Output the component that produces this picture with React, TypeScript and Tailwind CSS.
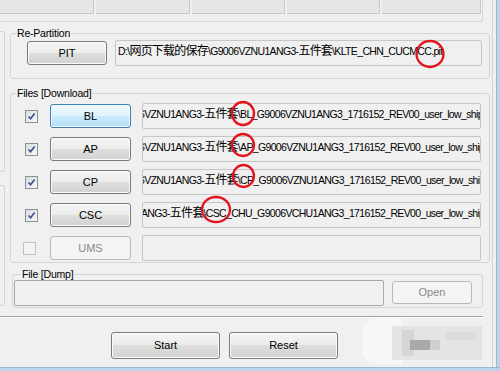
import React from "react";

const btnNormal =
  "border border-[#7a7a7a] bg-[linear-gradient(to_bottom,#f4f4f4_0%,#ececec_50%,#dedede_50%,#d2d2d2_100%)] shadow-[inset_0_0_0_1px_#fbfbfb] text-black";
const btnHot =
  "border border-[#3c7fb1] bg-[linear-gradient(to_bottom,#eef8fe_0%,#dff2fc_50%,#c9eafc_50%,#b4dff6_100%)] shadow-[inset_0_0_0_1px_#f4fbff] text-black";
const btnDisabled = "border border-[#b5b9bc] bg-[#f4f4f4] text-[#8a8a8a]";

function Check({ checked }: { checked: boolean }) {
  return (
    <div
      className={
        "w-[13px] h-[13px] shrink-0 border flex items-center justify-center " +
        (checked
          ? "border-[#8e8f8f] bg-[linear-gradient(135deg,#d8dbe0,#f7f8f9)]"
          : "border-[#c2c2c2] bg-[#f4f4f4]")
      }
    >
      {checked && (
        <svg width="9" height="9" viewBox="0 0 9 9">
          <path d="M1.5 4.5 L3.6 6.8 L7.6 1.5" fill="none" stroke="#3a4f8c" strokeWidth="1.6" />
        </svg>
      )}
    </div>
  );
}

function Cjk({ children }: { children: React.ReactNode }) {
  return <span className="text-[12px] tracking-[-0.8px]">{children}</span>;
}

function Field({ children, shift, cls }: { children?: React.ReactNode; shift?: string; cls: string }) {
  return (
    <div className={"shrink-0 h-[26px] border border-[#c6c6c6] rounded-[2px] bg-[#f0f0f0] overflow-hidden " + cls}>
      {children && (
        <div className={"whitespace-nowrap pt-[3px] leading-[14px] text-[10.5px] tracking-[-0.65px] " + (shift ?? "")}>
          {children}
        </div>
      )}
    </div>
  );
}

function GroupLabel({ children, cls }: { children: React.ReactNode; cls: string }) {
  return (
    <div className={"self-start -mt-[6px] px-[1px] bg-[#f0f0f0] leading-[11px] text-[10.5px] tracking-[-0.2px] " + cls}>
      {children}
    </div>
  );
}

function FileRow({
  name,
  checked,
  hot,
  disabled,
  text,
  shift,
  boxMl,
}: {
  name: string;
  checked: boolean;
  hot?: boolean;
  disabled?: boolean;
  text?: React.ReactNode;
  shift?: string;
  boxMl: string;
}) {
  return (
    <div className="flex items-center h-[26px]">
      <div className={boxMl}>
        <Check checked={checked} />
      </div>
      <div
        className={
          "w-[81px] h-[24px] rounded-[3px] flex items-center justify-center text-[11px] " +
          (hot ? btnHot : disabled ? btnDisabled : btnNormal) +
          (boxMl === "ml-[14px]" ? " ml-[12px]" : " ml-[14px]")
        }
      >
        {name}
      </div>
      <Field cls="ml-[11px] w-[339px]" shift={shift}>
        {text}
      </Field>
    </div>
  );
}

export default function App() {
  const tabW = ["w-[94px]", "w-[94px]", "w-[93px]", "w-[93px]", "w-[99px]"];
  return (
    <div className="w-[500px] h-[371px] bg-[#f0f0f0] relative overflow-hidden flex flex-col font-['Liberation_Sans','Noto_Sans_CJK_SC',sans-serif] text-black">
      <div className="flex h-[367px]">
        <div className="w-[496px] flex">
          <div className="w-[493px] h-full border-r border-[#d4d4d4] flex flex-col">
            {/* tab strip */}
            <div className="w-[483px] h-[22px] shrink-0 border-r border-b border-[#d8d8d8] rounded-br-[3px]">
              <div className="flex gap-[2px]">
                {tabW.map((w, i) => (
                  <div key={i} className={w + " h-[14px] bg-[#e6e6e6] border-b border-r border-[#c9c9c9]"} />
                ))}
              </div>
            </div>

            {/* main */}
            <div className="flex h-[290px] shrink-0">
              <div className="w-[5px] flex flex-col">
                <div className="mt-[9px] h-[141px] border-y border-r border-[#d4d4d4] rounded-r-[3px]" />
                <div className="mt-[13px] h-[121px] border-y border-r border-[#d4d4d4] rounded-r-[3px]" />
              </div>
              <div className="ml-[5px] flex flex-col">
                {/* Re-Partition */}
                <div className="mt-[11px] w-[480px] h-[46px] border border-[#d5d5d5] rounded-[3px] flex flex-col">
                  <GroupLabel cls="ml-[5px]">Re-Partition</GroupLabel>
                  <div className="flex items-center mt-[1px]">
                    <div className={"ml-[16px] w-[80px] h-[24px] rounded-[3px] flex items-center justify-center text-[11px] " + btnNormal}>
                      PIT
                    </div>
                    <Field cls="ml-[8px] w-[367px]" shift="pl-[2px]">
                      D:\<Cjk>网页下载的保存</Cjk>\G9006VZNU1ANG3-<Cjk>五件套</Cjk>\KLTE_CHN_CUCMCC.pit
                    </Field>
                  </div>
                </div>

                {/* Files [Download] */}
                <div className="mt-[14px] w-[480px] h-[170px] border border-[#d5d5d5] rounded-[3px] flex flex-col">
                  <GroupLabel cls="ml-[5px]">Files [Download]</GroupLabel>
                  <div className="mt-[4px] flex flex-col gap-[7px]">
                    <FileRow
                      name="BL"
                      checked
                      hot
                      boxMl="ml-[14px]"
                      shift="-ml-[4px]"
                      text={
                        <>
                          6VZNU1ANG3-<Cjk>五件套</Cjk>\BL_G9006VZNU1ANG3_1716152_REV00_user_low_ship.tar.md5
                        </>
                      }
                    />
                    <FileRow
                      name="AP"
                      checked
                      boxMl="ml-[14px]"
                      shift="-ml-[4px]"
                      text={
                        <>
                          6VZNU1ANG3-<Cjk>五件套</Cjk>\AP_G9006VZNU1ANG3_1716152_REV00_user_low_ship.tar.md5
                        </>
                      }
                    />
                    <FileRow
                      name="CP"
                      checked
                      boxMl="ml-[14px]"
                      shift="-ml-[4px]"
                      text={
                        <>
                          6VZNU1ANG3-<Cjk>五件套</Cjk>\CP_G9006VZNU1ANG3_1716152_REV00_user_low_ship.tar.md5
                        </>
                      }
                    />
                    <FileRow
                      name="CSC"
                      checked
                      boxMl="ml-[14px]"
                      shift="-ml-[2px]"
                      text={
                        <>
                          ANG3-<Cjk>五件套</Cjk>\CSC_CHU_G9006VCHU1ANG3_1716152_REV00_user_low_ship.tar.md5
                        </>
                      }
                    />
                    <FileRow name="UMS" checked={false} disabled boxMl="ml-[12px]" />
                  </div>
                </div>

                {/* File [Dump] */}
                <div className="mt-[11px] ml-[2px] w-[471px] h-[34px] border border-[#d5d5d5] rounded-[3px] flex flex-col">
                  <GroupLabel cls="ml-[8px]">File [Dump]</GroupLabel>
                  <div className="flex items-start">
                    <div className="ml-[1px] w-[370px] h-[26px] border border-[#a9a9a9] rounded-[2px] bg-[#f0f0f0]" />
                    <div className={"ml-[8px] mt-[1px] w-[80px] h-[23px] rounded-[3px] flex items-center justify-center text-[11px] " + btnDisabled}>
                      Open
                    </div>
                  </div>
                </div>
              </div>
            </div>

            {/* separator */}
            <div className="mt-[4px] w-[483px] h-[2px] border-t border-[#a3a3a3] border-b border-b-white" />

            {/* bottom buttons */}
            <div className="flex mt-[14px]">
              <div className={"ml-[111px] w-[109px] h-[27px] rounded-[3px] flex items-center justify-center text-[11px] " + btnNormal}>
                Start
              </div>
              <div className={"ml-[9px] w-[109px] h-[27px] rounded-[3px] flex items-center justify-center text-[11px] " + btnNormal}>
                Reset
              </div>
            </div>
          </div>
        </div>
        <div className="w-[4px] bg-[#bcd3ea] border-l border-[#9fb8d2]" />
      </div>
      <div className="h-[4px] bg-[#bcd3ea] border-t border-[#9fb8d2]" />

      {/* red annotation circles */}
      <svg className="absolute left-0 top-0 pointer-events-none" width="500" height="371">
        <g fill="none" stroke="#e3141c" strokeWidth="2.3">
          <ellipse cx="430" cy="54" rx="13.5" ry="13" />
          <ellipse cx="243" cy="113.5" rx="11" ry="11.5" />
          <ellipse cx="243" cy="145" rx="11" ry="11" />
          <ellipse cx="243.5" cy="176" rx="10.5" ry="11" />
          <ellipse cx="216" cy="209.5" rx="14" ry="12.5" />
        </g>
      </svg>

      {/* blurred watermark */}
      <div className="absolute left-[362px] top-[318px] w-[126px] h-[48px] pointer-events-none">
        <div className="absolute left-0 top-0 w-[40px] h-[46px] rounded-tl-[16px] rounded-bl-[14px] bg-[#f7f7f7]" />
        <div className="absolute left-[30px] top-[8px] w-[90px] h-[34px] bg-[#e4e4e4]" />
        <div className="absolute left-[40px] top-[12px] w-[12px] h-[26px] bg-[#d6d6d6]" />
        <div className="absolute left-[48px] top-[22px] w-[20px] h-[10px] bg-[#a9a9a9]" />
        <div className="absolute left-[68px] top-[22px] w-[10px] h-[10px] bg-[#cfcfcf]" />
        <div className="absolute left-[84px] top-[14px] w-[30px] h-[8px] bg-[#dcdcdc]" />
      </div>
    </div>
  );
}
